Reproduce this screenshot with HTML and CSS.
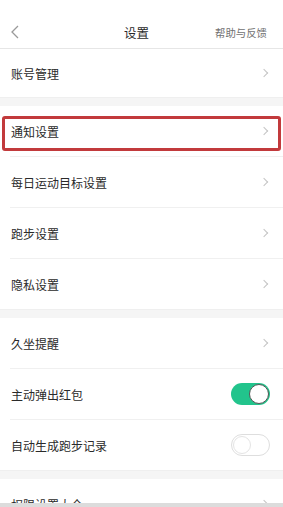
FILE: index.html
```html
<!DOCTYPE html>
<html lang="zh">
<head>
<meta charset="utf-8">
<title>设置</title>
<link rel="stylesheet" href="styles.css">
</head>
<body>
<div class="screen">
  <header class="nav">
    <span class="back"><svg width="10" height="14" viewBox="0 0 10 14"><path d="M8 1 L2 7 L8 13" fill="none" stroke="#9a9a9a" stroke-width="1.3"/></svg></span>
    <span class="title">设置</span>
    <span class="help">帮助与反馈</span>
  </header>

  <div class="group">
    <div class="row first"><span class="label">账号管理</span><span class="chev"></span></div>
  </div>
  <div class="gap"></div>
  <div class="group">
    <div class="row marked"><span class="label">通知设置</span><span class="chev"></span><span class="mark"></span></div>
    <div class="row"><span class="label">每日运动目标设置</span><span class="chev"></span></div>
    <div class="row"><span class="label">跑步设置</span><span class="chev"></span></div>
    <div class="row last"><span class="label">隐私设置</span><span class="chev"></span></div>
  </div>
  <div class="gap"></div>
  <div class="group">
    <div class="row"><span class="label">久坐提醒</span><span class="chev"></span></div>
    <div class="row"><span class="label">主动弹出红包</span><span class="switch on"><span class="knob"></span></span></div>
    <div class="row last"><span class="label">自动生成跑步记录</span><span class="switch off"><span class="knob"></span></span></div>
  </div>
  <div class="gap"></div>
  <div class="group">
    <div class="row"><span class="label">权限设置大全</span><span class="chev"></span></div>
  </div>
</div>
</body>
</html>
```

FILE: styles.css
```css
* { box-sizing: border-box; }
html, body { margin: 0; padding: 0; }
body {
  background: #dcdcdc;
  font-family: "Noto Sans CJK SC", "Noto Sans", sans-serif;
  color: #333;
}
.screen {
  width: 283px;
  height: 503px;
  overflow: hidden;
  background: #fff;
}
.nav {
  height: 49px;
  padding-top: 16px;
  border-bottom: 1px solid #e6e6e6;
  display: grid;
  grid-template-columns: 60px 1fr 60px;
  align-items: center;
  padding-left: 10px;
  padding-right: 16px;
}
.back { display: flex; align-items: center; height: 14px; }
.title {
  text-align: center;
  font-size: 12.5px;
  color: #2a2a2a;
  margin-left: -4px;
}
.help {
  text-align: right;
  font-size: 10.4px;
  color: #707070;
  white-space: nowrap;
}
.gap {
  height: 9px;
  background: #f5f5f5;
  border-top: 1px solid #efefef;
}
.row {
  position: relative;
  height: 51px;
  display: flex;
  align-items: center;
  justify-content: space-between;
  margin-left: 10px;
  padding: 0 13px 0 1px;
  border-bottom: 1px solid #f0f0f0;
}
.row.first { height: 48px; border-bottom: none; }
.row.last { height: 50px; border-bottom: none; }
.label { font-size: 12px; color: #2a2a2a; }
.chev {
  width: 6px;
  height: 6px;
  border-top: 1px solid #c4c4c4;
  border-right: 1px solid #c4c4c4;
  transform: rotate(45deg);
  margin-right: 3px;
}
.mark {
  position: absolute;
  left: -8px;
  right: 2px;
  top: 10px;
  bottom: 5px;
  border: 3px solid #c23a3c;
  border-radius: 3px;
}
.switch {
  width: 39px;
  height: 22px;
  border-radius: 11px;
  display: flex;
  align-items: center;
  padding: 1px;
}
.switch.on { background: #22c48c; justify-content: flex-end; }
.switch.off { background: #fff; border: 1.5px solid #dedede; justify-content: flex-start; }
.knob {
  width: 20px;
  height: 20px;
  border-radius: 50%;
  background: #fff;
  border: 1px solid #555;
}
.switch.off .knob { width: 18px; height: 18px; border: 1px solid #e4e4e4; }
```
